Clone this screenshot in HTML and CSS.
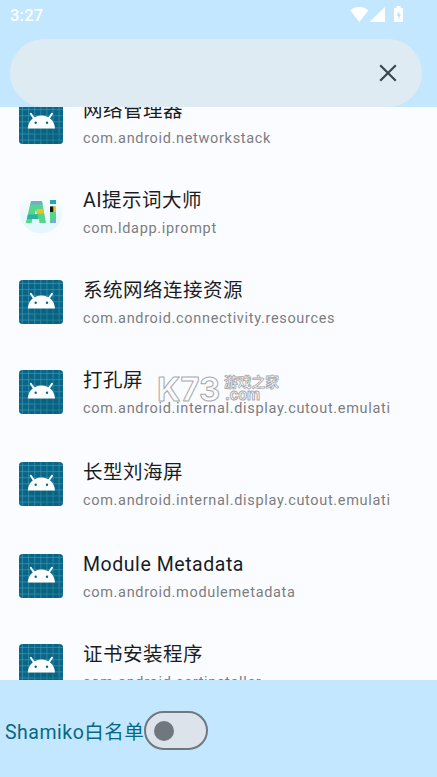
FILE: index.html
```html
<!DOCTYPE html>
<html lang="zh-CN">
<head>
<meta charset="utf-8">
<title>Shamiko</title>
<link rel="stylesheet" href="styles.css">
</head>
<body>
<svg class="defs" width="0" height="0" aria-hidden="true">
  <symbol id="android" viewBox="0 0 44 44">
    <rect width="44" height="44" rx="3.5" fill="#086788"/>
    <path d="M3.5 0V44M9.6 0V44M15.7 0V44M21.8 0V44M27.9 0V44M34 0V44M40.1 0V44M0 3.5H44M0 9.6H44M0 15.7H44M0 21.8H44M0 27.9H44M0 34H44M0 40.1H44" stroke="#4b98b0" stroke-width=".6"/>
    <path d="M10 28.4H36L42 34V44H25Z" fill="#035570" opacity=".2"/>
    <path d="M11.8 13.8L15 18.5M33 13.8L29.8 18.5" stroke="#fff" stroke-width="2" stroke-linecap="round"/>
    <path d="M8.8 28.4C9.4 20.5 15 15.5 22.4 15.5S35.4 20.5 36 28.4Z" fill="#fff"/>
    <circle cx="16.7" cy="22.8" r="1.2" fill="#086788"/><circle cx="28" cy="22.8" r="1.2" fill="#086788"/>
  </symbol>
  <linearGradient id="bubble" x1="0" y1="0" x2="0" y2="1">
    <stop offset=".1" stop-color="#f9fcff"/><stop offset=".8" stop-color="#e4f7fe"/>
  </linearGradient>
</svg>
<div class="screen">
  <header class="header">
    <div class="status">
      <span class="time">3:27</span>
      <svg class="status-icons" width="56" height="18" viewBox="0 0 56 18" fill="#fff">
        <path d="M.2 4.5C5-.1 13.5-.1 18.3 4.5L9.3 16Z"/>
        <path d="M19.5 16L35 1V16Z"/>
        <path d="M46.5 0h4v2h2.5v14h-9V2h2.5Z"/>
        <path d="M49.2 4.5L47 9.5h1.5V13.5l2.3-5.2h-1.6Z" fill="#b7dff5"/>
      </svg>
    </div>
    <div class="search">
      <svg width="18" height="18" viewBox="0 0 18 18"><path d="M1.2 1.2L16.8 16.8M16.8 1.2L1.2 16.8" stroke="#3c464e" stroke-width="2.2"/></svg>
    </div>
  </header>
  <main class="list">
    <div class="row"><svg class="icon"><use href="#android"/></svg><div class="text"><div class="name">网络管理器</div><div class="pkg">com.android.networkstack</div></div></div>
    <div class="row"><svg class="icon" viewBox="0 0 44 44">
      <circle cx="22" cy="22" r="21.5" fill="url(#bubble)"/>
      <path d="M12 11H23L27 33H20.5L20 29H13.5L12.5 33H6.8Z" fill="#54d68c"/>
      <path d="M12.2 11H22.8L23.5 14.5H11.5Z" fill="#72a9d5"/>
      <path d="M17.5 19H24.2L25.2 23.5H18.5Z" fill="#f6bf1b"/>
      <path d="M9 24.5H19V29H8Z" fill="#27b5a0"/>
      <path d="M16.8 20L15.8 24H18.2Z" fill="#e8f8ff"/>
      <path d="M31 10H37V14H31Z" fill="#20aab6"/><path d="M31 16.5H37V33H31Z" fill="#55d387"/>
      <path d="M31 16.5H34.5V22H31Z" fill="#15170d"/><path d="M34.5 16.5H37V22H34.5Z" fill="#f4bd35"/><path d="M32 29H37V33H32Z" fill="#83a6de"/>
    </svg><div class="text"><div class="name">AI提示词大师</div><div class="pkg">com.ldapp.iprompt</div></div></div>
    <div class="row"><svg class="icon"><use href="#android"/></svg><div class="text"><div class="name">系统网络连接资源</div><div class="pkg">com.android.connectivity.resources</div></div></div>
    <div class="row tall"><svg class="icon"><use href="#android"/></svg><div class="text"><div class="name">打孔屏</div><div class="pkg">com.android.internal.display.cutout.emulati</div></div></div>
    <div class="row tall"><svg class="icon"><use href="#android"/></svg><div class="text"><div class="name">长型刘海屏</div><div class="pkg">com.android.internal.display.cutout.emulati</div></div></div>
    <div class="row"><svg class="icon"><use href="#android"/></svg><div class="text"><div class="name latin">Module Metadata</div><div class="pkg">com.android.modulemetadata</div></div></div>
    <div class="row"><svg class="icon"><use href="#android"/></svg><div class="text"><div class="name">证书安装程序</div><div class="pkg">com.android.certinstaller</div></div></div>
  </main>
  <footer class="footer">
    <span class="label">Shamiko白名单</span>
    <span class="switch"><span class="thumb"></span></span>
  </footer>
  <svg class="watermark" width="128" height="34" viewBox="0 0 128 34">
    <text class="wm-logo" x="1" y="28.5" textLength="63" lengthAdjust="spacingAndGlyphs">K73</text>
    <text class="wm-cn" x="68" y="15" textLength="55" lengthAdjust="spacingAndGlyphs">游戏之家</text>
    <text class="wm-com" x="69" y="27.5" textLength="35" lengthAdjust="spacingAndGlyphs">.com</text>
  </svg>
</div>
</body>
</html>
```
FILE: styles.css
```css
* { box-sizing: border-box; }
body { margin: 0; font-family: Roboto, "Noto Sans CJK SC", sans-serif; }
.defs { position: absolute; }
.screen {
  position: relative;
  display: flex;
  flex-direction: column;
  width: 437px;
  height: 777px;
  overflow: hidden;
  background: #fbfcff;
}
.header { flex: none; height: 107px; background: #c2e7ff; }
.status {
  display: flex;
  justify-content: space-between;
  height: 39px;
  padding: 6px 31px 0 10px;
  color: #fff;
}
.time { font-size: 16.5px; line-height: 19px; font-weight: 500; letter-spacing: .2px; }
.search {
  display: flex;
  align-items: center;
  justify-content: flex-end;
  width: 412px;
  height: 68px;
  margin-left: 10px;
  padding-right: 25px;
  border-radius: 34px;
  background: #deebf3;
}
.list { flex: 1; min-height: 0; overflow: hidden; }
.row { display: flex; gap: 20px; height: 90px; padding: 23px 0 0 19px; }
.row:first-child { margin-top: -30px; }
.row.tall { height: 92px; }
.icon { flex: none; width: 44px; height: 44px; }
.text { margin-top: -3px; white-space: nowrap; }
.name { height: 28px; font-size: 19.5px; line-height: 28px; letter-spacing: .5px; color: #1a1c1f; }
.name.latin { letter-spacing: .55px; }
.pkg { height: 28px; font-size: 14.5px; line-height: 27px; letter-spacing: .67px; color: #7b7d81; }
.footer {
  display: flex;
  align-items: center;
  flex: none;
  height: 97px;
  padding: 4px 0 0 5px;
  background: #c2e7ff;
}
.label { width: 139px; font-size: 19.5px; letter-spacing: .5px; white-space: nowrap; color: #086782; }
.switch {
  display: flex;
  align-items: center;
  width: 64px;
  height: 39px;
  padding-left: 8px;
  border: 2.5px solid #70777e;
  border-radius: 20px;
  background: #dde3ea;
}
.thumb { width: 20px; height: 20px; border-radius: 50%; background: #70777e; }
.watermark { position: absolute; left: 156px; top: 372px; }
.watermark text { fill: #fbfcff; stroke: #a9aaad; stroke-width: 1px; stroke-linejoin: round; }
.watermark .wm-logo { font: 700 32px Inter, sans-serif; }
.watermark .wm-cn { font: 700 14px "Noto Sans CJK SC", sans-serif; stroke-width: .8px; }
.watermark .wm-com { font: 700 15px Inter, sans-serif; }
```
